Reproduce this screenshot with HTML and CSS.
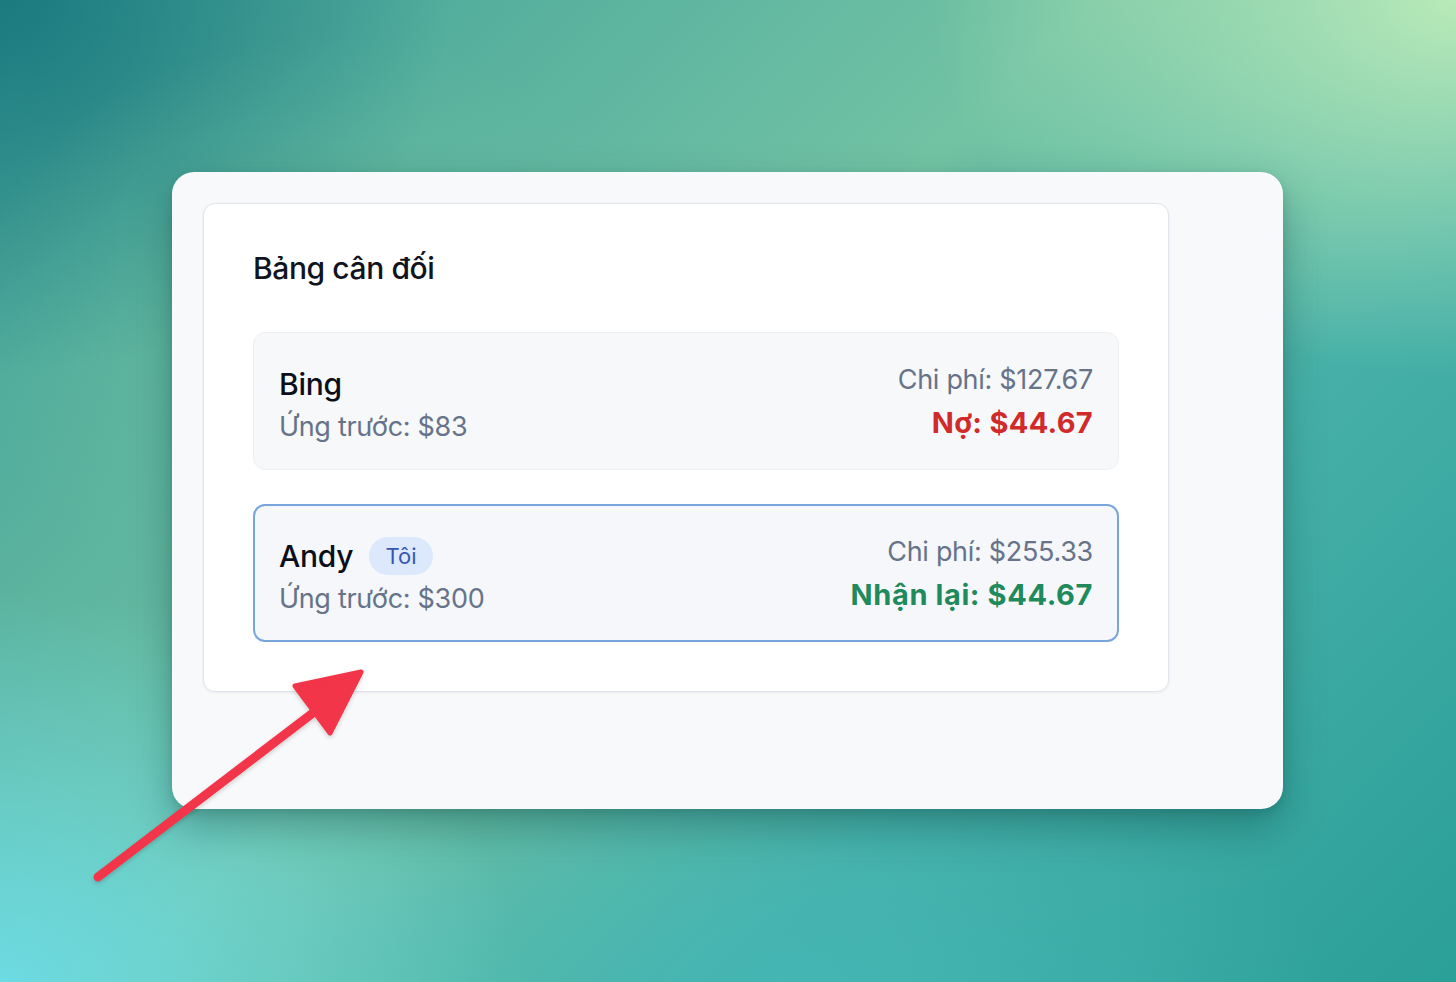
FILE: index.html
```html
<!DOCTYPE html>
<html lang="vi">
<head>
<meta charset="utf-8">
<title>Bảng cân đối</title>
<link rel="stylesheet" href="styles.css">
</head>
<body>
<div class="stage">
  <div class="panel">
    <section class="card">
      <h2 class="title">Bảng cân đối</h2>
      <div class="rows">
        <div class="row">
          <div class="left">
            <div class="name">Bing</div>
            <div class="sub">Ứng trước: $83</div>
          </div>
          <div class="right">
            <div class="cost">Chi phí: $127.67</div>
            <div class="owe">Nợ: $44.67</div>
          </div>
        </div>
        <div class="row me">
          <div class="left">
            <div class="name">Andy <span class="badge">Tôi</span></div>
            <div class="sub">Ứng trước: $300</div>
          </div>
          <div class="right">
            <div class="cost">Chi phí: $255.33</div>
            <div class="get">Nhận lại: $44.67</div>
          </div>
        </div>
      </div>
    </section>
  </div>
  <svg class="arrow" width="1456" height="982" viewBox="0 0 1456 982">
    <defs>
      <filter id="sh" x="-20%" y="-20%" width="140%" height="140%">
        <feDropShadow dx="0" dy="2" stdDeviation="2" flood-color="#000" flood-opacity="0.18"/>
      </filter>
    </defs>
    <g filter="url(#sh)" fill="#f2344a" stroke="#f2344a" stroke-linejoin="round" stroke-linecap="round">
      <line x1="98" y1="877" x2="322" y2="706" stroke-width="9"/>
      <polygon points="361,672 295,686 330,733" stroke-width="5"/>
    </g>
  </svg>
</div>
</body>
</html>
```

FILE: styles.css
```css
* { box-sizing: border-box; }
html, body { margin: 0; padding: 0; }
body {
  font-family: "Inter", "Noto Sans", "Liberation Sans", sans-serif;
  width: 1456px;
  height: 982px;
  overflow: hidden;
}
.stage {
  position: relative;
  width: 1456px;
  height: 982px;
  padding: 172px 0 0 172px;
  background:
    radial-gradient(ellipse 520px 420px at 330px 330px, rgba(110,190,160,0.55), rgba(110,190,160,0) 70%),
    radial-gradient(ellipse 700px 500px at 1456px 0px, rgba(190,236,185,0.95), rgba(190,236,185,0) 75%),
    radial-gradient(ellipse 700px 520px at 0px 982px, rgba(108,220,230,0.95), rgba(108,220,230,0) 75%),
    radial-gradient(ellipse 700px 300px at 800px 982px, rgba(70,185,185,0.7), rgba(70,185,185,0) 75%),
    radial-gradient(ellipse 600px 500px at 0px 0px, rgba(25,120,125,0.95), rgba(25,120,125,0) 75%),
    linear-gradient(135deg, #3f9f98 0%, #72c3a4 45%, #46b0a8 70%, #2a9f98 100%);
}
.panel {
  width: 1111px;
  height: 637px;
  background: #f8f9fb;
  border-radius: 22px;
  padding: 31px;
  box-shadow: 0 18px 40px rgba(10, 60, 60, 0.35), 0 4px 10px rgba(10,60,60,0.15);
}
.card {
  width: 966px;
  height: 489px;
  background: #ffffff;
  border: 1px solid #e1e5eb;
  border-radius: 12px;
  box-shadow: 0 1px 3px rgba(15, 23, 42, 0.06);
  padding: 42px 49px 48px 49px;
}
.title {
  margin: 0;
  font-size: 30px;
  line-height: 44px;
  font-weight: 500;
  color: #0f1420;
  letter-spacing: -0.4px;
}
.rows {
  margin-top: 42px;
  display: flex;
  flex-direction: column;
  gap: 34px;
}
.row {
  height: 138px;
  border-radius: 12px;
  background: #f7f8fa;
  border: 1px solid #eef0f3;
  padding: 0 25px;
  display: flex;
  align-items: center;
  justify-content: space-between;
}
.row.me {
  border: 2px solid #78a5dc;
  background: #f5f7fb;
  padding: 0 24px;
}
.left, .right { display: flex; flex-direction: column; }
.left { margin-top: 8px; }
.right { align-items: flex-end; margin-top: 2px; }
.name {
  font-size: 30px;
  line-height: 44px;
  font-weight: 500;
  color: #0b0f19;
  letter-spacing: -0.3px;
  display: flex;
  align-items: center;
  gap: 16px;
}
.badge {
  display: inline-flex;
  align-items: center;
  justify-content: center;
  height: 38px;
  width: 64px;
  border-radius: 19px;
  background: #dce8fb;
  color: #3556b8;
  font-size: 22px;
  font-weight: 400;
  letter-spacing: 0;
}
.sub {
  font-size: 27px;
  line-height: 42px;
  color: #667389;
  letter-spacing: -0.3px;
}
.cost {
  font-size: 27px;
  line-height: 42px;
  color: #667389;
  letter-spacing: -0.3px;
}
.owe, .get {
  font-size: 29px;
  line-height: 44px;
  font-weight: 700;
  letter-spacing: 0.3px;
}
.get { letter-spacing: 0.6px; }
.owe { color: #d02a2a; }
.get { color: #1f8a5b; }
.arrow {
  position: absolute;
  left: 0;
  top: 0;
  pointer-events: none;
}
```
